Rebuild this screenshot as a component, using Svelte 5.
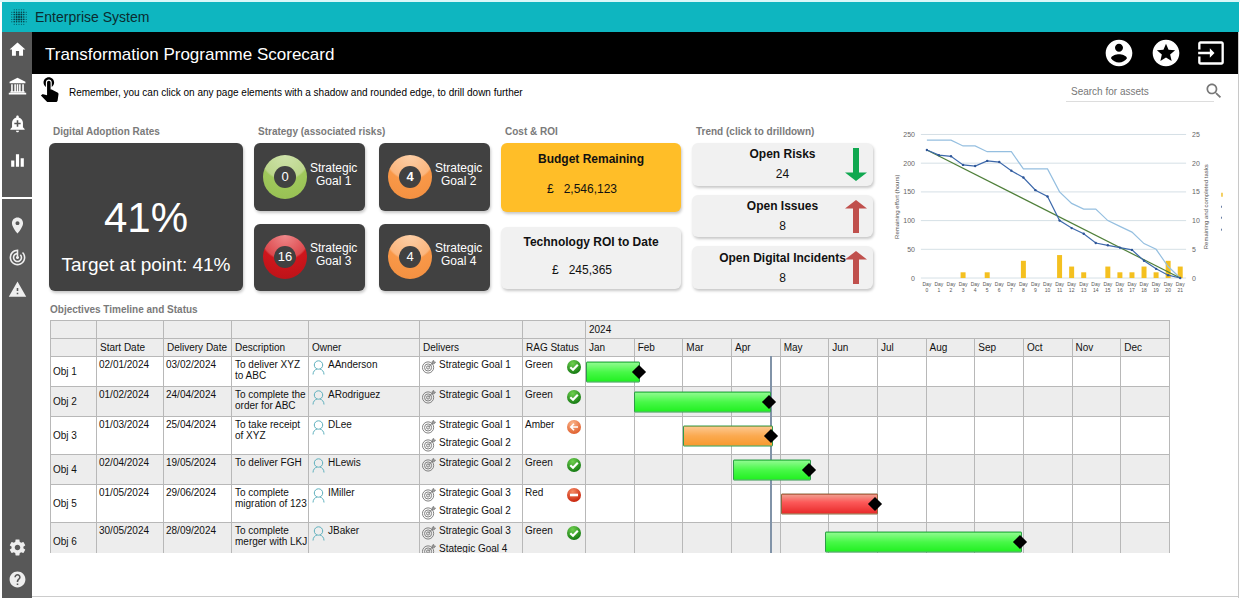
<script>
    const nav = {
        top: [
            { label: 'Home', d: 'M10 20v-6h4v6h5v-8h3L12 3 2 12h3v8z' },
            { label: 'Organisation', d: 'M12 1 2 6v2h20V6zM4 9h2v9H4zM8 9h2v9H8zM11 9h2v9h-2zM14 9h2v9h-2zM18 9h2v9h-2zM3 18h18v1.5H3zM1 20h22v2H1z' },
            { label: 'Alerts', d: 'M10.01 21.01c0 1.1.89 1.99 1.99 1.99s1.99-.89 1.99-1.99h-3.98zm8.87-4.19V11c0-3.25-2.25-5.97-5.29-6.69v-.72C13.59 2.71 12.88 2 12 2s-1.59.71-1.59 1.59v.72C7.37 5.03 5.12 7.75 5.12 11v5.82L3 18.94V20h18v-1.06l-2.12-2.12zM16 13.01h-3v3h-2v-3H8V11h3V8h2v3h3v2.01z' },
            { label: 'Reports', d: 'M10 20h4V4h-4v16zm-6 0h4v-8H4v8zM16 9v11h4V9h-4z' }
        ],
        middle: [
            { label: 'Places', d: 'M12 2C8.13 2 5 5.13 5 9c0 5.25 7 13 7 13s7-7.75 7-13c0-3.87-3.13-7-7-7zm0 9.5c-1.38 0-2.5-1.12-2.5-2.5s1.12-2.5 2.5-2.5 2.5 1.12 2.5 2.5-1.12 2.5-2.5 2.5z' },
            { label: 'Goals', d: 'M19.07 4.93l-1.41 1.41C19.1 7.79 20 9.79 20 12c0 4.42-3.58 8-8 8s-8-3.58-8-8c0-4.08 3.05-7.44 7-7.93v2.02C8.16 6.57 6 9.03 6 12c0 3.31 2.69 6 6 6s6-2.69 6-6c0-1.66-.67-3.16-1.76-4.24l-1.41 1.41C15.55 9.9 16 10.9 16 12c0 2.21-1.79 4-4 4s-4-1.79-4-4c0-1.86 1.28-3.41 3-3.86v2.14c-.6.35-1 .98-1 1.72 0 1.1.9 2 2 2s2-.9 2-2c0-.74-.4-1.38-1-1.72V2h-1C6.48 2 2 6.48 2 12s4.48 10 10 10 10-4.48 10-10c0-2.76-1.12-5.26-2.93-7.07z' },
            { label: 'Risks', d: 'M1 21h22L12 2 1 21zm12-3h-2v-2h2v2zm0-4h-2v-4h2v4z' }
        ],
        bottom: [
            { label: 'Settings', d: 'M19.43 12.98c.04-.32.07-.64.07-.98s-.03-.66-.07-.98l2.11-1.65c.19-.15.24-.42.12-.64l-2-3.46c-.12-.22-.39-.3-.61-.22l-2.49 1c-.52-.4-1.08-.73-1.69-.98l-.38-2.65C14.46 2.18 14.25 2 14 2h-4c-.25 0-.46.18-.49.42l-.38 2.65c-.61.25-1.17.59-1.69.98l-2.49-1c-.23-.09-.49 0-.61.22l-2 3.46c-.13.22-.07.49.12.64l2.11 1.65c-.04.32-.07.65-.07.98s.03.66.07.98l-2.11 1.65c-.19.15-.24.42-.12.64l2 3.46c.12.22.39.3.61.22l2.49-1c.52.4 1.08.73 1.69.98l.38 2.65c.03.24.24.42.49.42h4c.25 0 .46-.18.49-.42l.38-2.65c.61-.25 1.17-.59 1.69-.98l2.49 1c.23.09.49 0 .61-.22l2-3.46c.12-.22.07-.49-.12-.64l-2.11-1.65zM12 15.5c-1.93 0-3.5-1.57-3.5-3.5s1.57-3.5 3.5-3.5 3.5 1.57 3.5 3.5-1.57 3.5-3.5 3.5z' },
            { label: 'Help', d: 'M12 2C6.48 2 2 6.48 2 12s4.48 10 10 10 10-4.48 10-10S17.52 2 12 2zm1 17h-2v-2h2v2zm2.07-7.75l-.9.92C13.45 12.9 13 13.5 13 15h-2v-.5c0-1.1.45-2.1 1.17-2.83l1.24-1.26c.37-.36.59-.86.59-1.41 0-1.1-.9-2-2-2s-2 .9-2 2H8c0-2.21 1.79-4 4-4s4 1.79 4 4c0 .88-.36 1.68-.93 2.25z' }
        ]
    };

    const actions = [
        { label: 'Account', d: 'M12 2C6.48 2 2 6.48 2 12s4.48 10 10 10 10-4.48 10-10S17.52 2 12 2zm0 3c1.66 0 3 1.34 3 3s-1.34 3-3 3-3-1.34-3-3 1.34-3 3-3zm0 14.2c-2.5 0-4.71-1.28-6-3.22.03-1.99 4-3.08 6-3.08 1.99 0 5.97 1.09 6 3.08-1.29 1.94-3.5 3.22-6 3.22z' },
        { label: 'Favourites', d: 'M11.99 2C6.47 2 2 6.48 2 12s4.47 10 9.99 10C17.52 22 22 17.52 22 12S17.52 2 11.99 2zm4.24 16L12 15.45 7.77 18l1.12-4.81-3.73-3.23 4.92-.42L12 5l1.92 4.53 4.92.42-3.73 3.23L16.23 18z' },
        { label: 'Sign in', d: 'M21 2H3c-1.1 0-2 .9-2 2v5h2V4h18v16H3v-5H1v5c0 1.1.9 2 2 2h18c1.1 0 2-.9 2-2V4c0-1.1-.9-2-2-2zM11 16l4-4-4-4v3H1v2h10z' }
    ];

    const goals = [
        { n: 1, risks: 0, colour: 'green' },
        { n: 2, risks: 4, colour: 'orange', bold: true },
        { n: 3, risks: 16, colour: 'red' },
        { n: 4, risks: 4, colour: 'orange' }
    ];

    const trends = [
        { title: 'Open Risks', value: 24, down: true },
        { title: 'Open Issues', value: 8 },
        { title: 'Open Digital Incidents', value: 8 }
    ];

    // burndown chart
    const tasks = [24, 24, 24, 23, 23, 22, 22, 22, 19, 19, 19, 15, 13, 12, 12, 10, 9, 8, 6, 5, 2, 0];
    const effort = [223, 214, 212, 197, 195, 204, 202, 187, 175, 153, 142, 100, 87, 77, 61, 57, 53, 49, 30, 16, 5, 0];
    const completed = [0, 0, 0, 1, 0, 1, 0, 0, 3, 0, 0, 4, 2, 1, 0, 2, 1, 1, 2, 1, 3, 2];

    const px = (day) => 43 + day * 12.1;
    const py = (v) => 152.5 - v * 0.576;
    const points = (list, k = 1) => list.map((v, i) => `${px(i)},${py(v * k)}`).join(' ');

    const months = ['Jan', 'Feb', 'Mar', 'Apr', 'May', 'Jun', 'Jul', 'Aug', 'Sep', 'Oct', 'Nov', 'Dec'];
    const columns = ['', 'Start Date', 'Delivery Date', 'Description', 'Owner', 'Delivers', 'RAG Status'];

    // from, to and due are days of the year
    const objectives = [
        { start: '02/01/2024', delivery: '03/02/2024', text: 'To deliver XYZ to ABC', owner: 'AAnderson', delivers: ['Strategic Goal 1'], rag: 'Green', from: 0, to: 34, due: 33 },
        { start: '01/02/2024', delivery: '24/04/2024', text: 'To complete the order for ABC', owner: 'ARodriguez', delivers: ['Strategic Goal 1'], rag: 'Green', from: 30, to: 116, due: 115 },
        { start: '01/03/2024', delivery: '25/04/2024', text: 'To take receipt of XYZ', owner: 'DLee', delivers: ['Strategic Goal 1', 'Strategic Goal 2'], rag: 'Amber', from: 61, to: 117, due: 116 },
        { start: '02/04/2024', delivery: '19/05/2024', text: 'To deliver FGH', owner: 'HLewis', delivers: ['Strategic Goal 2'], rag: 'Green', from: 92, to: 141, due: 140 },
        { start: '01/05/2024', delivery: '29/06/2024', text: 'To complete migration of 123', owner: 'IMiller', delivers: ['Strategic Goal 3', 'Strategic Goal 2'], rag: 'Red', from: 122, to: 183, due: 181 },
        { start: '30/05/2024', delivery: '28/09/2024', text: 'To complete merger with LKJ', owner: 'JBaker', delivers: ['Strategic Goal 3', 'Stategic Goal 4'], rag: 'Green', from: 150, to: 273, due: 272 }
    ];
    const today = 116;

    // the lane is as wide as January, so 1200% is the whole year
    const pct = (day) => (day / 366) * 1200;

    const dots = [0, 1, 2, 3, 4, 5, 6];
    const dotSize = (r, c) => {
        const far = Math.max(Math.abs(r - 3), Math.abs(c - 3));
        if (Math.abs(r - 3) + Math.abs(c - 3) > 5) return 0;
        return far < 2 ? 1 : far < 3 ? 0.8 : 0.5;
    };

    let query = '';
</script>

{#snippet navGroup(items)}
    {#each items as item}
        <button class="nav-btn" aria-label={item.label}>
            <svg viewBox="0 0 24 24"><path fill-rule="evenodd" d={item.d} /></svg>
        </button>
    {/each}
{/snippet}

<div class="app">
    <header class="brand">
        <svg class="logo" viewBox="0 0 16 16">
            {#each dots as r}
                {#each dots as c}
                    <circle cx={0.8 + c * 2.4} cy={0.8 + r * 2.4} r={dotSize(r, c)} />
                {/each}
            {/each}
        </svg>
        <span>Enterprise System</span>
    </header>

    <div class="body">
        <nav>
            <div class="group first">{@render navGroup(nav.top)}</div>
            <div class="group second">
                <div class="stack">{@render navGroup(nav.middle)}</div>
                <div class="stack">{@render navGroup(nav.bottom)}</div>
            </div>
        </nav>

        <div class="page">
            <div class="titlebar">
                <h1>Transformation Programme Scorecard</h1>
                <div class="actions">
                    {#each actions as a}
                        <button aria-label={a.label}>
                            <svg viewBox="0 0 24 24"><path d={a.d} /></svg>
                        </button>
                    {/each}
                </div>
            </div>

            <main>
                <div class="hint">
                    <svg class="touch" viewBox="4 2 17 22"><path d="M9 11.24V7.5C9 6.12 10.12 5 11.5 5S14 6.12 14 7.5v3.74c1.21-.81 2-2.18 2-3.74C16 5.01 13.99 3 11.5 3S7 5.01 7 7.5c0 1.56.79 2.93 2 3.74zm9.84 4.63l-4.54-2.26c-.17-.07-.35-.11-.54-.11H13v-6c0-.83-.67-1.5-1.5-1.5S10 6.67 10 7.5v10.74l-3.43-.72c-.08-.01-.15-.03-.24-.03-.31 0-.59.13-.79.33l-.79.8 4.94 4.94c.27.27.65.44 1.06.44h6.79c.75 0 1.33-.55 1.44-1.28l.75-5.27c.01-.07.02-.14.02-.2 0-.62-.38-1.16-.91-1.38z" /></svg>
                    <p>Remember, you can click on any page elements with a shadow and rounded edge, to drill down further</p>
                    <form class="search" on:submit|preventDefault>
                        <input type="text" aria-label="Search for assets" placeholder="Search for assets" bind:value={query} />
                        <button aria-label="Search">
                            <svg viewBox="0 0 24 24"><path d="M15.5 14h-.79l-.28-.27C15.41 12.59 16 11.11 16 9.5 16 5.91 13.09 3 9.5 3S3 5.91 3 9.5 5.91 16 9.5 16c1.61 0 3.09-.59 4.23-1.57l.27.28v.79l5 4.99L20.49 19l-4.99-5zm-6 0C7.01 14 5 11.99 5 9.5S7.01 5 9.5 5 14 7.01 14 9.5 11.99 14 9.5 14z" /></svg>
                        </button>
                    </form>
                </div>

                <div class="scores">
                    <section>
                        <h2>Digital Adoption Rates</h2>
                        <button class="card dark adoption">
                            <span class="big">41%</span>
                            <span class="target">Target at point: 41%</span>
                        </button>
                    </section>

                    <section>
                        <h2>Strategy (associated risks)</h2>
                        <div class="goals">
                            {#each goals as g}
                                <button class="card dark goal">
                                    <span class="ring {g.colour}"><span class="hole" class:bold={g.bold}>{g.risks}</span></span>
                                    <span class="name">Strategic<br />Goal {g.n}</span>
                                </button>
                            {/each}
                        </div>
                    </section>

                    <section>
                        <h2>Cost &amp; ROI</h2>
                        <div class="costs">
                            <button class="card money budget">
                                <b>Budget Remaining</b>
                                <span class="amount"><span>£</span><span>2,546,123</span></span>
                            </button>
                            <button class="card money light">
                                <b>Technology ROI to Date</b>
                                <span class="amount"><span>£</span><span>245,365</span></span>
                            </button>
                        </div>
                    </section>

                    <section>
                        <h2>Trend (click to drilldown)</h2>
                        <div class="trends">
                            {#each trends as t}
                                <button class="card light trend">
                                    <b>{t.title}</b>
                                    <span>{t.value}</span>
                                    <svg class="arrow" class:down={t.down} viewBox="0 0 22 33"><path d="M11 0 22 8.500H14V33H8V8.500H0z" /></svg>
                                </button>
                            {/each}
                        </div>
                    </section>

                    <svg class="chart" viewBox="0 0 339 165">
                        {#each [0, 50, 100, 150, 200, 250] as v}
                            <line class="grid" x1="37" x2="303" y1={py(v)} y2={py(v)} />
                            <text class="tick" x="31" y={py(v) + 2.5} text-anchor="end">{v}</text>
                            <text class="tick" x="309" y={py(v) + 2.5}>{v / 10}</text>
                        {/each}
                        {#each completed as v, i}
                            {#if v}
                                <rect class="done" x={px(i) - 2.5} y={py(v * 10)} width="5" height={v * 5.76} />
                            {/if}
                            <text class="day" x={px(i)} y="160.5">Day</text>
                            <text class="day" x={px(i)} y="167">{i}</text>
                        {/each}
                        <polyline class="tasks" points={points(tasks, 10)} />
                        <line class="ideal" x1={px(0)} y1={py(223)} x2={px(21)} y2={py(0)} />
                        <polyline class="effort" points={points(effort)} />
                        {#each effort as v, i}
                            <circle class="dot" cx={px(i)} cy={py(v)} r="1.2" />
                        {/each}
                        <text class="axis" transform="translate(15.5 81) rotate(-90)">Remaining effort (hours)</text>
                        <text class="axis right" transform="translate(325 81) rotate(-90)">Remaining and completed tasks</text>
                        <path d="M339 67v4" stroke="#f0c030" stroke-width="1.5" />
                        <path d="M338.500 80v2M338.500 91v2M338.500 103v2" stroke="#6a7fa5" stroke-width="1" />
                    </svg>
                </div>

                <h2 class="timeline-title">Objectives Timeline and Status</h2>
                <div class="timeline">
                    <table>
                        <colgroup>
                            <col class="c-obj" /><col class="c-start" /><col class="c-end" /><col class="c-desc" />
                            <col class="c-owner" /><col class="c-goal" /><col class="c-rag" />
                            {#each months as m}<col />{/each}
                        </colgroup>
                        <thead>
                            <tr>
                                {#each columns as c}<th></th>{/each}
                                <th colspan="12">2024</th>
                            </tr>
                            <tr>
                                {#each columns as c}<th>{c}</th>{/each}
                                {#each months as m}<th>{m}</th>{/each}
                            </tr>
                        </thead>
                        <tbody>
                            {#each objectives as o, i}
                                <tr class:tall={o.delivers.length > 1}>
                                    <td class="obj">Obj {i + 1}</td>
                                    <td>{o.start}</td>
                                    <td>{o.delivery}</td>
                                    <td class="desc">{o.text}</td>
                                    <td>
                                        <div class="item">
                                            <svg class="person" viewBox="0 0 13 15"><circle cx="6.5" cy="5" r="4.2" /><path d="M1 14.500c0-3 2-5 4-5.500M12 14.500c0-3-2-5-4-5.500" /></svg>
                                            {o.owner}
                                        </div>
                                    </td>
                                    <td>
                                        {#each o.delivers as d}
                                            <div class="item">
                                                <svg class="aim" viewBox="0 0 15 15"><circle cx="6.5" cy="8" r="6" /><circle cx="6.5" cy="8" r="3.8" /><circle cx="6.5" cy="8" r="1.7" /><path d="M6.500 8 13 1.500M11 3.500V1.500L12.500.5V2.500H14.500L13 4H11z" /></svg>
                                                {d}
                                            </div>
                                        {/each}
                                    </td>
                                    <td>
                                        <div class="rag">
                                            {o.rag}
                                            <svg class="orb" viewBox="0 0 14 14">
                                                <defs>
                                                    <radialGradient id="orb{i}" cx="40%" cy="25%" r="75%">
                                                        <stop offset="0" class="{o.rag}-a" /><stop offset="1" class="{o.rag}-b" />
                                                    </radialGradient>
                                                </defs>
                                                <circle cx="7" cy="7" r="7" fill="url(#orb{i})" stroke="none" />
                                                {#if o.rag === 'Green'}
                                                    <path d="M3.300 7.300 6 9.800 10.800 4.800" stroke-width="2.2" />
                                                {:else if o.rag === 'Amber'}
                                                    <path d="M11 7H4M7 3.800 3.800 7 7 10.200" stroke-width="1.6" />
                                                {:else}
                                                    <path d="M3 7h8" stroke-width="2.6" />
                                                {/if}
                                            </svg>
                                        </div>
                                    </td>
                                    {#each months as m, k}
                                        <td class="month">
                                            {#if k === 0}
                                                <div class="lane">
                                                    <div class="today" style="left: {pct(today)}%"></div>
                                                    <div class="bar {o.rag}" style="left: {pct(o.from)}%; width: {pct(o.to - o.from)}%"></div>
                                                    <div class="due" style="left: {pct(o.due)}%"></div>
                                                </div>
                                            {/if}
                                        </td>
                                    {/each}
                                </tr>
                            {/each}
                        </tbody>
                    </table>
                </div>
            </main>
        </div>
    </div>
</div>

<style>
    :global(body) {
        background: #fff;
    }

    .app {
        box-sizing: border-box;
        height: 100vh;
        padding: 2px 1px 0 2px;
        display: flex;
        flex-direction: column;
        font-family: "Liberation Sans", Arial, sans-serif;
        font-size: 10px;
        color: #111;
        background: linear-gradient(#d9f7f8, #d9f7f8) top / 100% 2px no-repeat;
    }

    button {
        font: inherit;
        color: inherit;
        border: none;
        background: none;
        padding: 0;
        cursor: pointer;
    }

    svg {
        display: block;
    }

    h1, h2, p {
        margin: 0;
    }

    .brand {
        height: 30px;
        flex: none;
        display: flex;
        align-items: center;
        gap: 8px;
        padding-left: 9px;
        background: #0eb6c0;
        font-size: 14px;
        color: #0b2c30;
    }

    .logo {
        width: 16px;
        height: 16px;
        fill: #073a40;
    }

    .body {
        flex: 1;
        min-height: 0;
        display: flex;
    }

    nav {
        width: 30px;
        flex: none;
        display: flex;
        flex-direction: column;
        gap: 2px;
    }

    .group, .stack {
        display: flex;
        flex-direction: column;
        align-items: center;
    }

    .group {
        background: #585858;
    }

    .first {
        gap: 18px;
        padding: 8px 0 27px;
    }

    .second {
        flex: 1;
        justify-content: space-between;
        padding: 17px 0 9px;
    }

    .stack {
        gap: 13px;
    }

    .nav-btn svg {
        width: 19px;
        height: 19px;
        fill: #fff;
    }

    .second .nav-btn svg {
        fill: #eee;
    }

    .page {
        flex: 1;
        min-width: 0;
        display: flex;
        flex-direction: column;
        border-right: 1px solid #c8c8c8;
    }

    .titlebar {
        height: 42px;
        flex: none;
        display: flex;
        align-items: center;
        justify-content: space-between;
        padding: 0 13px;
        background: #000;
        color: #fff;
    }

    h1 {
        padding-top: 3px;
        font-size: 17px;
        font-weight: normal;
    }

    .actions {
        display: flex;
        align-items: center;
        gap: 15px;
    }

    .actions svg {
        width: 32px;
        height: 32px;
        fill: #fff;
    }

    .actions button:last-child svg {
        width: 28px;
        height: 28px;
    }

    main {
        flex: 1;
        min-height: 0;
        box-sizing: border-box;
        display: flex;
        flex-direction: column;
        padding: 0 16px 43px 17px;
        margin-bottom: 1px;
        border-bottom: 1px solid #ccc;
    }

    .hint {
        display: flex;
        align-items: center;
        height: 36px;
        flex: none;
    }

    .touch {
        width: 20px;
        height: 26px;
        margin-top: -6px;
        margin-left: -9px;
    }

    .hint p {
        flex: 1;
        margin-left: 9px;
        color: #000;
    }

    .search {
        display: flex;
        align-items: center;
        margin-right: -2px;
    }

    .search input {
        width: 148px;
        height: 19px;
        box-sizing: border-box;
        margin-right: -10px;
        padding: 0 16px 0 5px;
        border: none;
        border-bottom: 1px solid #ddd;
        background: none;
        font: inherit;
        outline: none;
    }

    .search input::placeholder {
        color: #777;
        opacity: 1;
    }

    .search button svg {
        width: 20px;
        height: 20px;
        margin-top: -3px;
        fill: #777;
    }

    h2 {
        font-size: 10px;
        line-height: 12px;
        padding-left: 4px;
        color: #7a7a7a;
    }

    .scores {
        display: grid;
        grid-template-columns: 194fr 236fr 180fr 181fr 338fr;
        gap: 11px;
        margin-top: 16px;
        flex: none;
    }

    section {
        display: flex;
        flex-direction: column;
        gap: 5px;
        height: 165px;
    }

    .card {
        border-radius: 6px;
        box-shadow: 1px 2px 3px rgba(0, 0, 0, 0.22);
    }

    .dark {
        background: #414141;
        color: #fff;
    }

    .light {
        background: #f1f1f1;
    }

    .adoption {
        flex: 1;
        display: flex;
        flex-direction: column;
        align-items: center;
        justify-content: flex-end;
        gap: 13px;
        padding-bottom: 15px;
    }

    .big {
        font-size: 42px;
        line-height: 46px;
    }

    .target {
        font-size: 19px;
        line-height: 22px;
    }

    .goals {
        flex: 1;
        display: grid;
        grid-template-columns: 1fr 1fr;
        gap: 13px 14px;
    }

    .goal {
        display: flex;
        align-items: center;
        gap: 3px;
        padding-left: 9px;
    }

    .ring {
        width: 44px;
        height: 44px;
        flex: none;
        display: grid;
        place-items: center;
        border-radius: 50%;
    }

    .ring.green {
        background: radial-gradient(circle at 50% 0, #cfe3ab 0, #bcd68c 48%, #a0c85c 52%, #96bf52);
    }

    .ring.orange {
        background: radial-gradient(circle at 50% 0, #fdd0a8 0, #fbb67e 48%, #f99848 52%, #f28f40);
    }

    .ring.red {
        background: radial-gradient(circle at 50% 0, #ef8a8c 0, #dd4a4e 48%, #cf161c 52%, #b81218);
    }

    .hole {
        width: 22px;
        height: 22px;
        border-radius: 50%;
        background: #414141;
        font-size: 13px;
        line-height: 22px;
        text-align: center;
    }

    .bold {
        font-weight: bold;
    }

    .name {
        font-size: 12px;
        line-height: 13px;
        margin-bottom: 4px;
    }

    .costs, .trends {
        flex: 1;
        display: grid;
        margin-bottom: 2px;
    }

    .costs {
        grid-template-rows: 69fr 62fr;
        gap: 15px;
    }

    .money {
        display: flex;
        flex-direction: column;
        align-items: center;
        justify-content: center;
        gap: 14px;
        padding-bottom: 4px;
        font-size: 12px;
        line-height: 14px;
    }

    .budget {
        background: #ffbe28;
        gap: 16px;
        padding-bottom: 8px;
    }

    .amount {
        display: flex;
        gap: 10px;
        margin-right: 18px;
    }

    .trends {
        grid-template-rows: repeat(3, 1fr);
        gap: 9px;
    }

    .trend {
        position: relative;
        display: flex;
        flex-direction: column;
        align-items: center;
        justify-content: center;
        gap: 6px;
        font-size: 12px;
        line-height: 14px;
    }

    .arrow {
        position: absolute;
        right: 6px;
        top: 5px;
        width: 22px;
        height: 33px;
        fill: #c0504d;
    }

    .arrow.down {
        fill: #10a850;
        transform: rotate(180deg);
    }

    .chart {
        width: 100%;
        overflow: visible;
    }

    .chart .grid {
        stroke: #d5e0e6;
        stroke-width: 1;
    }

    .tick {
        font-size: 7px;
        fill: #666;
    }

    .day {
        font-size: 5px;
        fill: #555;
        text-anchor: middle;
    }

    .axis {
        font-size: 6px;
        fill: #555;
        text-anchor: middle;
    }

    .done {
        fill: #f4c020;
    }

    .tasks, .effort, .ideal {
        fill: none;
        stroke-width: 1.2;
    }

    .tasks {
        stroke: #95bfe0;
    }

    .effort {
        stroke: #3d69ab;
    }

    .ideal {
        stroke: #4f7f3a;
    }

    .dot {
        fill: #2e5597;
    }

    .timeline-title {
        flex: none;
        margin: 13px 0 4px;
        padding-left: 1px;
    }

    .timeline {
        flex: 1;
        min-height: 0;
        overflow: hidden;
        margin: 0 52px 0 1px;
    }

    table {
        width: 100%;
        table-layout: fixed;
        border-collapse: collapse;
    }

    .c-obj { width: 46px; }
    .c-start { width: 67px; }
    .c-end { width: 68px; }
    .c-desc { width: 77px; }
    .c-owner { width: 111px; }
    .c-goal { width: 103px; }
    .c-rag { width: 63px; }

    th, td {
        padding: 0 2px;
        border: 1px solid #b8b8b8;
        text-align: left;
        vertical-align: top;
        white-space: nowrap;
        line-height: 16px;
    }

    th {
        height: 17px;
        padding: 0 3px;
        background: #ededed;
        font-weight: normal;
        vertical-align: middle;
    }

    tbody tr {
        height: 30px;
    }

    tbody tr.tall {
        height: 38px;
    }

    tbody tr:nth-child(even) {
        background: #ededed;
    }

    .obj {
        vertical-align: middle;
    }

    .desc {
        padding: 2px 0 0 3px;
        line-height: 11px;
        white-space: normal;
    }

    .item {
        display: flex;
        gap: 3px;
        height: 18px;
    }

    .item + .item {
        height: 16px;
    }

    .person, .aim {
        flex: none;
        margin-top: 3px;
        fill: none;
        stroke-width: 1;
    }

    .person {
        width: 13px;
        height: 15px;
        margin-left: 1px;
        stroke: #5fb0bd;
    }

    .aim {
        width: 14px;
        height: 14px;
        stroke: #777;
    }

    .rag {
        display: flex;
        justify-content: space-between;
    }

    .orb {
        width: 14px;
        height: 14px;
        margin: 3px 2px 0 0;
        fill: none;
        stroke: #fff;
    }

    .Green-a { stop-color: #6fd04f; }
    .Green-b { stop-color: #157a12; }
    .Amber-a { stop-color: #fbb58a; }
    .Amber-b { stop-color: #e0602e; }
    .Red-a { stop-color: #f58a63; }
    .Red-b { stop-color: #c8240c; }

    .month {
        position: relative;
        padding: 0;
    }

    .lane {
        position: absolute;
        inset: 0 -1px 0 0;
    }

    .today {
        position: absolute;
        top: -1px;
        bottom: 0;
        width: 2px;
        margin-left: -1px;
        background: #8193a8;
    }

    .bar {
        position: absolute;
        top: 50%;
        height: 21px;
        box-sizing: border-box;
        transform: translateY(-50%);
        border: 1px solid #2f9a4a;
        border-radius: 1px;
    }

    .bar.Green {
        background: linear-gradient(#90fa90, #48f848 50%, #22f022);
    }

    .bar.Amber {
        background: linear-gradient(#fcc890, #fba94f 50%, #f79a2e);
    }

    .bar.Red {
        background: linear-gradient(#f0a090, #fc5a5a 40%, #e82a2a);
        border-color: #8a6a40;
    }

    .due {
        position: absolute;
        top: 50%;
        width: 10px;
        height: 10px;
        margin: -5px 0 0 -5px;
        background: #000;
        transform: rotate(45deg);
    }
</style>
